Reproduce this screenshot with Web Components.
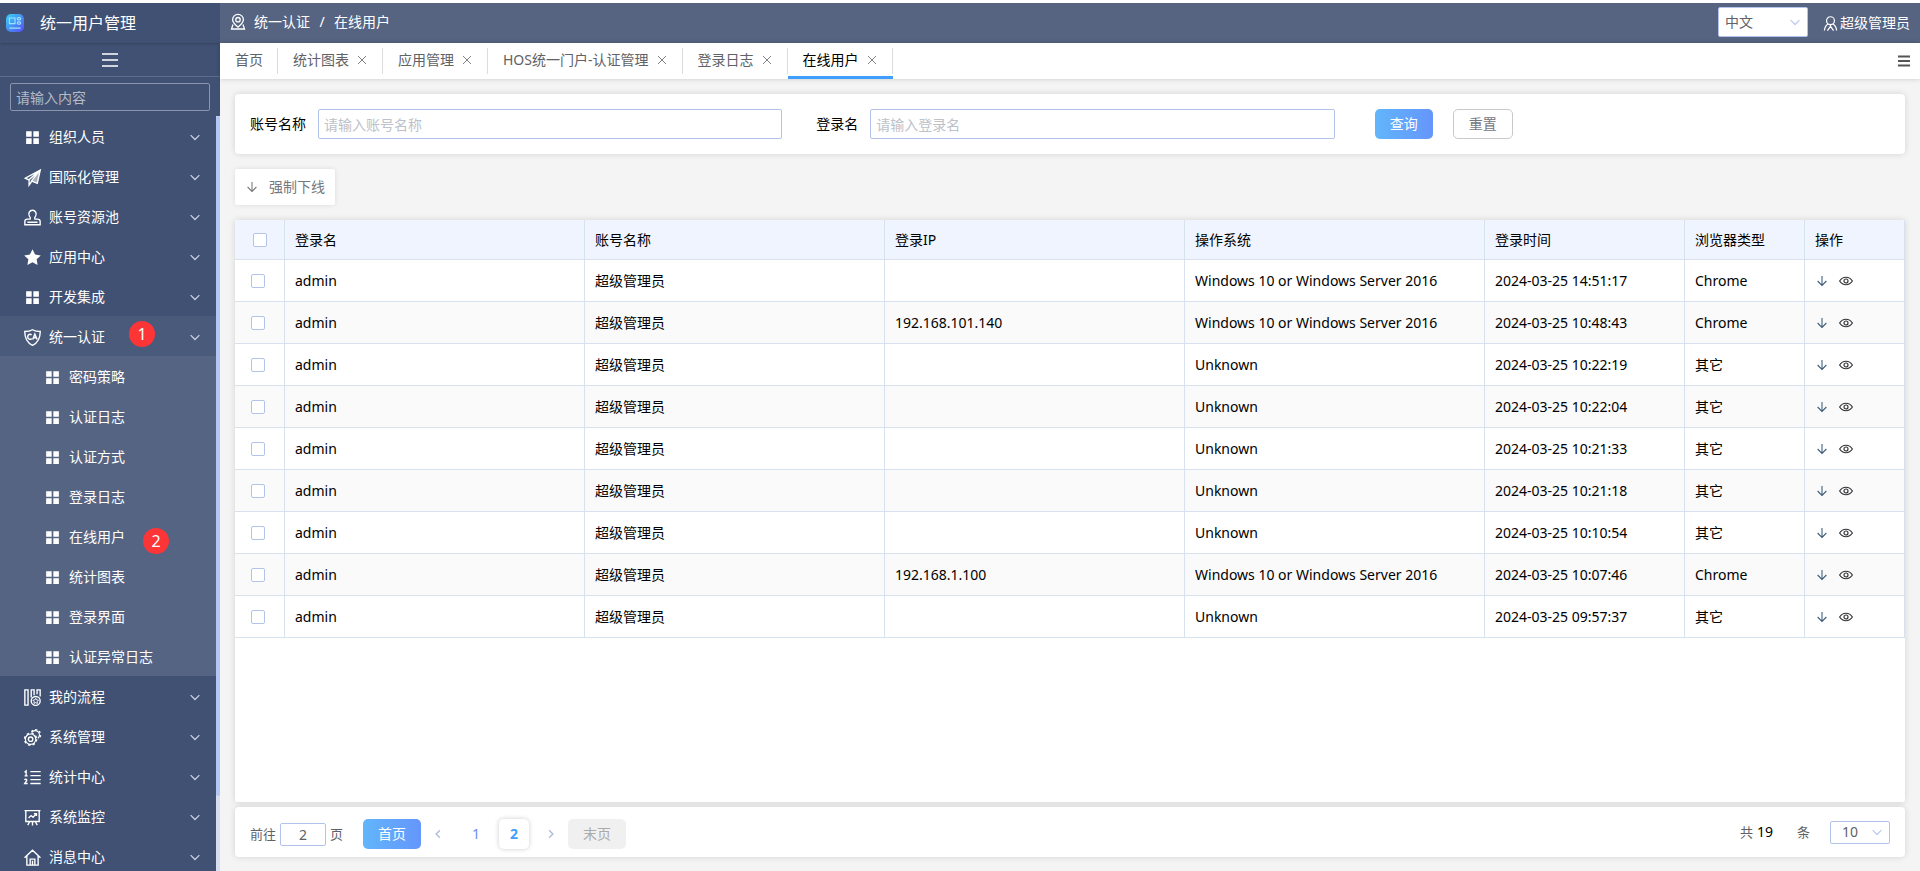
<!DOCTYPE html>
<html lang="zh-CN">
<head>
<meta charset="utf-8">
<meta name="viewport" content="width=device-width, initial-scale=1">
<title>统一用户管理</title>
<style>
  body {
    margin: 0;
    background: #f4f4f4;
    font-family: "Noto Sans", "Noto Sans CJK SC", sans-serif;
    font-size: 14px;
    line-height: 20px;
    color: #000;
    --line: #d8e1ee;
    --field: #b3c4ec;
    --shadow: 0 0 6px rgba(0, 0, 0, .14);
    --grad: linear-gradient(90deg, #62b5fb, #6596fb);
  }
</style>
</head>
<body>
<user-console></user-console>

<script>
const css = `
  *, *::before, *::after { box-sizing: border-box; }
  button, input, select { font: inherit; color: inherit; margin: 0; }
  button { padding: 0; border: 0; background: none; cursor: pointer; }
  input[type=text], select { outline: none; border-radius: 2px; }
  ::placeholder { color: #bcc1ca; opacity: 1; }
  a { color: inherit; text-decoration: none; }
`;
const define = (name, html, setup) => {
  const t = document.createElement('template');
  t.innerHTML = html.replace('<style>', '<style>' + css);
  customElements.define(name, class extends HTMLElement {
    connectedCallback() {
      if (this.shadowRoot) return;
      this.attachShadow({ mode: 'open' }).append(t.content.cloneNode(true));
      if (setup) setup.call(this, this.shadowRoot);
    }
  });
};

/* Glyphs on a 16 x 16 grid; outlines use the current colour. */
const GLYPHS = {
  grid: '<path d="M2 2h5.2v5.200H2zM8.800 2H14v5.200H8.800zM2 8.800h5.200V14H2zM8.800 8.800H14V14H8.800z" fill="currentColor" stroke="none"/>',
  plane: '<path d="M15.300 1 1.200 8.600l3.300 1.600L15 1.300 7 11.200l5.500 2.300L15.300 1zM4.800 10.200v5l2.500-3.500" fill="none"/><path d="M15.300 1 7 11.200l5.700 2.300z" fill="currentColor" fill-opacity=".55" stroke="none"/>',
  stamp: '<path d="M5.800 9.500c.6-1.200 0-1.800-.7-2.700C3.700 4.500 5 1.200 8 1.200s4.300 3.300 2.900 5.600c-.7.900-1.300 1.500-.7 2.700h2.600c1.600 0 2.400 1 2.400 2.300v3H.8v-3c0-1.300.8-2.300 2.400-2.300zM3.200 12.500h9.600"/>',
  star: '<path d="m8 .3 2.400 4.900 5.400.8-3.900 3.700.9 5.400L8 12.500l-4.800 2.600.9-5.400L.2 6l5.400-.8z" fill="currentColor" stroke="none"/>',
  shield: '<path d="M8 .7c2.200 1.300 4.500 1.700 7.300 1.700 0 6-1.300 10.200-7.300 13C2 12.600.7 8.400.7 2.400 3.500 2.400 5.800 2 8 .7z"/><path d="M7.200 5.600C5.500 4.200 3.500 5.200 3.500 7.300s2 3.100 3.700 1.700M8.200 9.900l2-5 2.200 5M9 8.300h2.600" stroke-width="1.400"/>',
  flow: '<path d="M.8.800h3v14.400h-3zM6.800 8V.8h2.700v5M12.300 5V.8h2.900V7"/><circle cx="11" cy="11.200" r="4.200"/><path d="m11 8.700.9 1.600 1.700.3-1.200 1.300.2 1.700-1.600-.8-1.600.8.2-1.700-1.200-1.300 1.700-.3z" stroke-width=".9"/>',
  gears: '<circle cx="6.200" cy="9.600" r="4.900" stroke-width="1.100"/><circle cx="6.200" cy="9.600" r="5.700" stroke-width="1.300" stroke-dasharray="2.300 2.177"/><circle cx="6.200" cy="9.600" r="2.100"/><path d="M7.300 3.200A4 4 0 1 1 13 8.700" stroke-width="1.100"/><path d="M6.900 2.400A4.900 4.900 0 1 1 13.500 9.500" stroke-width="1.200" stroke-dasharray="2 2"/>',
  list: '<path d="M6 2.500h9.700M6 6.200h9.700M6 10h9.700M6 13.700h9.700M.5 3 2 1.800v5M.5 6.500h3M.6 10.300c.4-1 2.200-.8 2 .4L.7 13.600h2.800"/>',
  board: '<path d="M.5 1.500h15M1.700 1.500v10.300h12.600V1.500M4.300 8.500l2.400-2.300 1.800 1.500 3-3.200M9.300 4.300h2.400v2.200M8 12v3.500M5.300 12 3.500 15.200M10.700 12l1.800 3.200"/>',
  home: '<path d="M.5 8.200 8 1.200l7.500 7M2.700 6.500v8.700h10.600V6.500M5.800 15V9.500h4.400V15M8 11v4"/>',
  down: '<path d="m1 5 7 7 7-7"/>',
  left: '<path d="m11 2-6 6 6 6"/>',
  right: '<path d="m5 2 6 6-6 6"/>',
  close: '<path d="m1.500 1.500 13 13M14.500 1.500l-13 13"/>',
  arrow: '<path d="M8 0v15M1 8l7 7 7-7"/>',
  eye: '<path d="M.7 8C4.400 2.300 11.600 2.300 15.300 8 11.600 13.700 4.400 13.700.7 8z"/><circle cx="8" cy="8" r="2.300"/>',
  bars: '<path d="M0 2h16M0 8h16M0 14h16"/>',
  pin: '<path d="M8 13.200C5 10.500 2.600 8.600 2.600 5.700a5.400 5.400 0 0 1 10.800 0c0 2.900-2.400 4.800-5.400 7.500z"/><circle cx="8" cy="5.700" r="2.200"/><path d="M3 10.500 1.500 15h13L13 10.500"/>',
  user: '<circle cx="8" cy="5" r="4.200"/><path d="M5.300 8.600C3 10 1.800 12.200 1.500 15.500M10.700 8.600c2.300 1.400 3.500 3.600 3.800 6.900M4.700 15.500 8 11l3.300 4.500M8 9.500V11"/>',
  logo: '<defs><linearGradient id="g" x1="0" y1="0" x2="1" y2="1"><stop stop-color="#36d3f5"/><stop offset="1" stop-color="#5a4df5"/></linearGradient></defs><rect width="16" height="16" rx="4.500" fill="url(#g)" stroke="none"/><g stroke="#9be4ff" stroke-width="1"><path d="M3 3.500h5v5H3zM3 12.500h10"/><rect x="10" y="3.200" width="3" height="2" rx="1"/><rect x="10" y="7" width="3" height="2" rx="1"/></g>'
};
define('ui-icon', `<style>
  :host { display: inline-flex; flex: none; width: 16px; height: 16px; }
  svg { width: 100%; height: 100%; overflow: visible; fill: none; stroke: currentColor; stroke-width: var(--stroke, 1.3); }
</style><svg viewBox="0 0 16 16" aria-hidden="true"></svg>`, function (r) {
  r.querySelector('svg').innerHTML = GLYPHS[this.getAttribute('name')];
});

define('step-badge', `<style>
  :host { position: absolute; display: grid; place-items: center; width: 26px; height: 26px;
          border-radius: 50%; background: #fd3537; color: #fff; font-size: 16px; line-height: 24px; }
</style><slot></slot>`);

define('nav-item', `<style>
  :host { display: block; position: relative; height: 40px; color: #fff; }
  :host([open]) { background: #4a5a7b; }
  a { display: flex; align-items: center; height: 100%; padding: 2px 16px 0 24px; gap: 8px; }
  a > ui-icon:first-child { width: 17px; height: 17px; }
  .label { flex: 1; }
  a > .fold { width: 10px; height: 10px; color: #c9d1e2; --stroke: 2; }
  :host([sub]) a { padding-left: 44px; }
  :host([sub]) .fold { display: none; }
</style><a href="#"><ui-icon></ui-icon><span class="label"><slot></slot></span><ui-icon class="fold" name="down"></ui-icon></a><slot name="badge"></slot>`,
function (r) {
  const old = r.querySelector('ui-icon'), icon = document.createElement('ui-icon');
  icon.setAttribute('name', this.getAttribute('icon') || 'grid');
  old.replaceWith(icon);
});

define('side-bar', `<style>
  :host { display: flex; flex-direction: column; background: #405173; color: #fff; overflow: hidden; }
  header { display: flex; align-items: center; height: 40px; flex: none; padding: 0 6px; gap: 16px; font-size: 16px;
           box-shadow: 0 0 3px rgba(0, 0, 0, .35); }
  header ui-icon { width: 18px; height: 18px; }
  .fold { display: grid; place-items: center; flex: none; height: 34px; border-bottom: 1px solid #5d6c8a; --stroke: 1.6; }
  .search { flex: none; padding: 6px 10px 5px; }
  input { display: block; width: 100%; height: 28px; padding: 0 5px; background: transparent; border: 1px solid #8b95ab; }
  ::placeholder { color: #b4bac6; }
  .body { flex: 1; min-height: 0; display: flex; }
  nav { flex: 1; overflow: hidden; }
  .sub { background: #566483; }
  .track { width: 4px; background: #d7def0; }
  .thumb { height: 90%; background: #b3c6f5; border-radius: 2px; }
</style>
<header><ui-icon name="logo"></ui-icon><span>统一用户管理</span></header>
<button class="fold" aria-label="折叠菜单"><ui-icon name="bars"></ui-icon></button>
<div class="search"><input type="text" aria-label="搜索菜单" placeholder="请输入内容"></div>
<div class="body">
  <nav>
    <nav-item>组织人员</nav-item>
    <nav-item icon="plane">国际化管理</nav-item>
    <nav-item icon="stamp">账号资源池</nav-item>
    <nav-item icon="star">应用中心</nav-item>
    <nav-item>开发集成</nav-item>
    <nav-item icon="shield" open>统一认证<step-badge slot="badge" style="left:129px;top:5px">1</step-badge></nav-item>
    <div class="sub">
      <nav-item sub>密码策略</nav-item>
      <nav-item sub>认证日志</nav-item>
      <nav-item sub>认证方式</nav-item>
      <nav-item sub>登录日志</nav-item>
      <nav-item sub>在线用户<step-badge slot="badge" style="left:143px;top:12px">2</step-badge></nav-item>
      <nav-item sub>统计图表</nav-item>
      <nav-item sub>登录界面</nav-item>
      <nav-item sub>认证异常日志</nav-item>
    </div>
    <nav-item icon="flow">我的流程</nav-item>
    <nav-item icon="gears">系统管理</nav-item>
    <nav-item icon="list">统计中心</nav-item>
    <nav-item icon="board">系统监控</nav-item>
    <nav-item icon="home">消息中心</nav-item>
  </nav>
  <div class="track"><div class="thumb"></div></div>
</div>`);

define('drop-down', `<style>
  :host { display: block; position: relative; color: #606266; }
  select { display: block; width: 100%; height: 100%; appearance: none; background: #fff; border: 1px solid var(--field); padding: 0 6px; }
  :host([narrow]) select { padding: 0 11px; }
  ui-icon { position: absolute; right: 8px; top: 0; bottom: 0; margin: auto; width: 10px; height: 10px; color: #bccbf0; --stroke: 2; pointer-events: none; }
</style><select></select><ui-icon name="down"></ui-icon>`, function (r) {
  const s = r.querySelector('select');
  s.setAttribute('aria-label', this.getAttribute('label'));
  s.add(new Option(this.getAttribute('value')));
});

define('top-bar', `<style>
  :host { display: flex; align-items: center; height: 40px; flex: none; padding: 0 10px 2px; background: #566482; color: #fff; }
  nav { flex: 1; display: flex; align-items: center; gap: 8px; }
  .sep { width: 8px; text-align: center; }
  drop-down { width: 90px; height: 30px; margin-right: 15px; }
  .user { display: flex; align-items: center; gap: 2px; padding-top: 2px; }
  .user ui-icon { width: 15px; height: 15px; }
</style>
<nav aria-label="当前位置"><ui-icon name="pin"></ui-icon><a href="#">统一认证</a><span class="sep">/</span><span>在线用户</span></nav>
<drop-down label="语言" value="中文"></drop-down>
<a class="user" href="#"><ui-icon name="user"></ui-icon>超级管理员</a>`);

define('page-tab', `<style>
  :host { display: flex; align-items: center; gap: 8px; position: relative; padding: 0 16px 2px 15px; color: #606266; }
  :host::after { content: ""; position: absolute; right: 0; top: 5px; bottom: 5px; width: 1px; background: #dcdcdc; }
  button { display: flex; }
  button ui-icon { width: 10px; height: 10px; color: #77797d; --stroke: 1.5; }
  :host([fixed]) { padding-right: 15px; }
  :host([fixed]) button { display: none; }
  :host([active]) { color: #000; box-shadow: inset 0 -3px #409eff; }
</style><a href="#"><slot></slot></a><button aria-label="关闭"><ui-icon name="close"></ui-icon></button>`);

define('tab-strip', `<style>
  :host { display: flex; flex: none; height: 36px; background: #fff; box-shadow: 0 0 5px rgba(0, 0, 0, .18); padding-right: 10px; }
  .menu { margin: auto 0 auto auto; display: flex; color: #555; }
  .menu ui-icon { width: 12px; height: 12px; --stroke: 2.7; }
</style>
<page-tab fixed>首页</page-tab><page-tab>统计图表</page-tab><page-tab>应用管理</page-tab><page-tab>HOS统一门户-认证管理</page-tab><page-tab>登录日志</page-tab><page-tab active>在线用户</page-tab>
<button class="menu" aria-label="标签菜单"><ui-icon name="bars"></ui-icon></button>`);

define('push-button', `<style>
  :host { display: block; height: 30px; }
  button { height: 100%; padding: 0 15px; border-radius: 5px; color: #fff; background: var(--grad); white-space: nowrap; }
  :host([plain]) button { background: #fff; border: 1px solid #c9c9c9; color: #77787c; }
  button:disabled { background: #f0f0f0; color: #aaa; cursor: default; }
</style><button><slot></slot></button>`, function (r) {
  r.querySelector('button').disabled = this.hasAttribute('disabled');
});

define('search-form', `<style>
  :host { display: block; background: #fff; border-radius: 4px; box-shadow: var(--shadow); padding: 15px; }
  form { display: grid; grid-template-columns: auto 16fr auto 16fr auto auto 13fr; align-items: center; }
  label { padding-right: 12px; }
  label ~ label { padding-left: 34px; }
  input { height: 30px; min-width: 0; width: 100%; padding: 0 5px; background: #fff; border: 1px solid var(--field); }
  push-button { margin-left: 20px; }
  input + push-button { margin-left: 40px; }
</style>
<form>
  <label for="account">账号名称</label><input id="account" type="text" placeholder="请输入账号名称">
  <label for="login">登录名</label><input id="login" type="text" placeholder="请输入登录名">
  <push-button>查询</push-button><push-button plain>重置</push-button>
</form>`);

define('tool-button', `<style>
  :host { display: block; align-self: flex-start; height: 36px; }
  button { display: flex; align-items: center; gap: 12px; height: 100%; padding: 0 10px 0 12px; background: #fff; border-radius: 2px;
           box-shadow: 0 0 5px rgba(0, 0, 0, .1); color: #77787c; }
  ui-icon { width: 10px; height: 10px; --stroke: 1.7; }
</style><button><ui-icon name="arrow"></ui-icon><span><slot></slot></span></button>`);

define('session-table', `<style>
  :host { display: block; background: #fff; border-radius: 2px; box-shadow: var(--shadow); }
  table { width: 100%; border-collapse: separate; border-spacing: 0; table-layout: fixed; }
  .c-pick { width: 50px; }
  .c-time { width: 200px; }
  .c-kind { width: 120px; }
  .c-acts { width: 100px; }
  th, td { height: 42px; padding: 0 10px; text-align: left; font-weight: 400; white-space: nowrap;
           border-right: 1px solid var(--line); border-bottom: 1px solid var(--line); }
  th { height: 40px; background: #f0f4ff; }
  tbody tr:nth-child(even) { background: #fafafa; }
  th:first-child { padding-left: 18px; }
  td:first-child { padding-left: 16px; }
  input { appearance: none; display: block; width: 14px; height: 14px; background: #fff; border: 1px solid var(--field); border-radius: 2px; }
  .acts { display: flex; align-items: center; gap: 12px; padding-left: 2px; }
  .acts button { display: flex; color: #303133; }
  .acts button:first-child { color: #3c5c78; }
  .acts ui-icon { width: 14px; height: 14px; --stroke: 1.3; }
  .acts ui-icon[name=arrow] { width: 10px; height: 10px; --stroke: 1.7; }
</style>
<table>
  <colgroup><col class="c-pick"><col><col><col><col><col class="c-time"><col class="c-kind"><col class="c-acts"></colgroup>
  <thead><tr><th><input type="checkbox" aria-label="全选"></th><th>登录名</th><th>账号名称</th><th>登录IP</th><th>操作系统</th><th>登录时间</th><th>浏览器类型</th><th>操作</th></tr></thead>
  <tbody></tbody>
</table>`, function (r) {
  const WIN = 'Windows 10 or Windows Server 2016';
  const rows = [
    ['', WIN, '14:51:17', 'Chrome'],
    ['192.168.101.140', WIN, '10:48:43', 'Chrome'],
    ['', 'Unknown', '10:22:19', '其它'],
    ['', 'Unknown', '10:22:04', '其它'],
    ['', 'Unknown', '10:21:33', '其它'],
    ['', 'Unknown', '10:21:18', '其它'],
    ['', 'Unknown', '10:10:54', '其它'],
    ['192.168.1.100', WIN, '10:07:46', 'Chrome'],
    ['', 'Unknown', '09:57:37', '其它']
  ];
  r.querySelector('tbody').innerHTML = rows.map(([ip, os, time, kind]) => `<tr>
    <td><input type="checkbox" aria-label="选择此行"></td><td>admin</td><td>超级管理员</td><td>${ip}</td><td>${os}</td>
    <td>2024-03-25 ${time}</td><td>${kind}</td>
    <td><div class="acts"><button aria-label="强制下线"><ui-icon name="arrow"></ui-icon></button><button aria-label="查看"><ui-icon name="eye"></ui-icon></button></div></td></tr>`).join('');
});

define('page-bar', `<style>
  :host { display: flex; align-items: center; height: 50px; flex: none; padding: 4px 15px 0; background: #fff; border-radius: 4px; box-shadow: var(--shadow); color: #606266; }
  label, .small { font-size: 13px; }
  input { width: 46px; height: 23px; margin: 0 4px; border: 1px solid var(--field); text-align: center; color: #606266; }
  .pages { display: flex; align-items: center; margin-left: 20px; }
  .pages > button { width: 30px; height: 30px; border-radius: 5px; color: #6a8cf5; }
  .pages > button.step { display: grid; place-items: center; width: 34px; color: #b0bfdc; }
  .pages > button.num { margin: 0 8px 0 6px; }
  .pages > button.now { color: #409eff; font-weight: 700; box-shadow: 0 0 5px rgba(0, 0, 0, .2); margin: 0 5px 0 0; }
  .step ui-icon { width: 10px; height: 10px; --stroke: 2.4; }
  .total { margin: 0 0 4px auto; display: flex; align-items: center; }
  b { font-weight: 400; color: #000; margin: 0 24px 0 4px; }
  drop-down { width: 60px; height: 23px; margin-left: 20px; }
</style>
<label for="page">前往</label><input id="page" type="text" value="2"><span class="small">页</span>
<div class="pages">
  <push-button>首页</push-button>
  <button class="step" aria-label="上一页"><ui-icon name="left"></ui-icon></button>
  <button class="num">1</button><button class="num now">2</button>
  <button class="step" aria-label="下一页"><ui-icon name="right"></ui-icon></button>
  <push-button disabled>末页</push-button>
</div>
<div class="total"><span class="small">共</span><b>19</b><span class="small">条</span><drop-down narrow label="每页条数" value="10"></drop-down></div>`);

define('user-console', `<style>
  :host { display: grid; grid-template-columns: 220px minmax(0, 1fr); height: 100vh; border-top: 3px solid #fff; box-sizing: border-box; }
  .right { display: flex; flex-direction: column; min-height: 0; }
  main { flex: 1; min-height: 0; display: flex; flex-direction: column; gap: 15px; padding: 15px 15px 14px; }
  .data { flex: 1; min-height: 0; display: flex; flex-direction: column; gap: 5px; }
  session-table { flex: 1; min-height: 0; }
  side-bar { min-height: 0; }
</style>
<side-bar></side-bar>
<div class="right">
  <top-bar></top-bar>
  <tab-strip></tab-strip>
  <main>
    <search-form></search-form>
    <tool-button>强制下线</tool-button>
    <div class="data"><session-table></session-table><page-bar></page-bar></div>
  </main>
</div>`);
</script>
</body>
</html>
